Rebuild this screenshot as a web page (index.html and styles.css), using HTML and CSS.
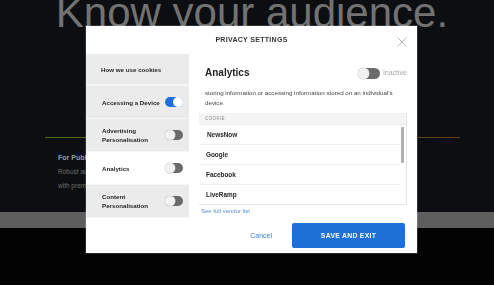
FILE: index.html
```html
<!DOCTYPE html>
<html lang="en">
<head>
    <meta charset="UTF-8">
    <title>Privacy settings</title>
    <link rel="stylesheet" href="styles.css">
</head>
<body>
    <div class="page">
        <h1 class="hero">Know your audience.</h1>
        <div class="rule"></div>
        <div class="intro">
            <h4>For Publishers</h4>
            <p>Robust audience data for every site<br>with premium data partners</p>
        </div>
        <div class="band"></div>
    </div>

    <div class="overlay">
        <div class="modal">
            <div class="modal-head">
                <span></span>
                <h2>PRIVACY SETTINGS</h2>
                <button class="close" aria-label="Close">
                    <svg width="10" height="10" viewBox="0 0 10 10">
                        <path d="M0.5 0.5 L9.5 9.5 M9.5 0.5 L0.5 9.5" stroke="#b4b4b4" stroke-width="1" fill="none"/>
                    </svg>
                </button>
            </div>
            <div class="modal-body">
                <ul class="side">
                    <li class="side-item first">How we use cookies</li>
                    <li class="side-item">Accessing a Device <span class="switch on"></span></li>
                    <li class="side-item">Advertising<br>Personalisation <span class="switch"></span></li>
                    <li class="side-item active">Analytics <span class="switch"></span></li>
                    <li class="side-item">Content<br>Personalisation <span class="switch"></span></li>
                </ul>
                <div class="panel">
                    <div class="panel-title">
                        <h3>Analytics</h3>
                        <div class="state"><span class="switch big"></span> Inactive</div>
                    </div>
                    <p class="desc">storing information or accessing information stored on an individual's device.</p>
                    <div class="vendors">
                        <div class="vendors-head">COOKIE</div>
                        <div class="vendor-scroll">
                            <ul class="vendor-list">
                                <li class="indent">NewsNow</li>
                                <li>Google</li>
                                <li>Facebook</li>
                                <li>LiveRamp</li>
                            </ul>
                            <div class="track"><div class="thumb"></div></div>
                        </div>
                    </div>
                    <a class="vendor-link" href="#">See full vendor list</a>
                    <div class="actions">
                        <a class="cancel" href="#">Cancel</a>
                        <button class="save">SAVE AND EXIT</button>
                    </div>
                </div>
            </div>
        </div>
    </div>
</body>
</html>
```

FILE: styles.css
```css
html {
    background: #030303;
}
body {
    margin: 0;
    font-family: "Liberation Sans", Arial, sans-serif;
    overflow: hidden;
}

/* page behind the dialog */
.page {
    background: #0c0e11;
}
.hero {
    margin: -8px 0 0 0;
    padding-left: 10px;
    font-size: 42px;
    line-height: 42px;
    font-weight: normal;
    text-align: center;
    color: #727272;
    white-space: nowrap;
}
.rule {
    height: 1px;
    margin: 103px 34px 0 45px;
    background: linear-gradient(to right, #4d6a1c, #55561c 55%, #6b3d16);
}
.intro {
    padding-left: 58px;
    padding-bottom: 19px;
}
.intro h4 {
    margin: 15px 0 2px 0;
    font-size: 7px;
    line-height: 10px;
    color: #9a9a9a;
}
.intro p {
    margin: 0;
    font-size: 6.5px;
    line-height: 14px;
    color: #6e6e6e;
}
.band {
    height: 16px;
    background: #5d5d5d;
}

/* dialog */
.overlay {
    position: fixed;
    top: 0;
    left: 0;
    right: 0;
    bottom: 0;
    padding: 26px 0 0 86px;
}
.modal {
    width: 331px;
    height: 227px;
    background: #fff;
    display: flex;
    flex-direction: column;
    box-shadow: 0 0 0 1px rgba(255, 255, 255, 0.15);
}
.modal-head {
    height: 28px;
    display: grid;
    grid-template-columns: 1fr auto 1fr;
    align-items: center;
}
.modal-head h2 {
    margin: 0;
    font-size: 7px;
    line-height: 10px;
    letter-spacing: 0.3px;
    color: #333;
}
.close {
    justify-self: end;
    margin: 4px 10px 0 0;
    padding: 0;
    border: 0;
    background: none;
    display: flex;
}
.modal-body {
    flex: 1;
    display: flex;
}

.side {
    list-style: none;
    margin: 0;
    padding: 0;
    width: 103px;
}
.side-item {
    height: 32px;
    display: flex;
    align-items: center;
    justify-content: space-between;
    padding: 0 6px 0 16px;
    background: #ebebeb;
    border-bottom: 1px solid #f6f6f6;
    font-size: 6.2px;
    font-weight: bold;
    line-height: 9px;
    color: #262626;
}
.side-item.first {
    height: 30px;
    padding-left: 15px;
    border-bottom: 2px solid #f4f4f4;
}
.side-item.active {
    background: #fff;
}

.switch {
    flex: none;
    width: 18px;
    height: 10px;
    border-radius: 5px;
    background: #6a6a6a;
    position: relative;
}
.switch::after {
    content: "";
    position: absolute;
    top: 0;
    left: 0;
    width: 10px;
    height: 10px;
    border-radius: 50%;
    background: #f2f2f2;
    box-shadow: 0 0 0 0.5px #ccc;
}
.switch.on {
    background: #1b6fe0;
}
.switch.on::after {
    left: 8px;
    background: #fff;
    box-shadow: none;
}
.switch.big {
    width: 22px;
    height: 11px;
    border-radius: 6px;
}
.switch.big::after {
    width: 11px;
    height: 11px;
}

/* right panel */
.panel {
    flex: 1;
    padding: 10px 10px 0 10px;
    display: flex;
    flex-direction: column;
}
.panel-title {
    height: 18px;
    display: flex;
    align-items: center;
    justify-content: space-between;
    padding-left: 6px;
}
.panel-title h3 {
    margin: 0;
    font-size: 10px;
    line-height: 12px;
    color: #222;
}
.state {
    display: flex;
    align-items: center;
    gap: 3px;
    font-size: 7px;
    line-height: 10px;
    color: #a9a9a9;
}
.desc {
    margin: 6px 0 0 0;
    padding: 0 4px 0 6px;
    font-size: 6.2px;
    line-height: 9.5px;
    color: #444;
}
.vendors {
    margin-top: 6px;
    border-right: 1px solid #e4e4e4;
    border-bottom: 1px solid #e6e6e6;
}
.vendors-head {
    height: 11px;
    line-height: 11px;
    padding-left: 6px;
    background: #f4f4f4;
    border-bottom: 1px solid #ececec;
    font-size: 4.5px;
    letter-spacing: 0.4px;
    color: #888;
}
.vendor-scroll {
    display: flex;
    height: 79px;
}
.vendor-list {
    flex: 1;
    list-style: none;
    margin: 0;
    padding: 0;
}
.vendor-list li {
    height: 19px;
    line-height: 19px;
    padding-left: 7px;
    border-bottom: 1px solid #efefef;
    font-size: 6.4px;
    font-weight: bold;
    color: #242424;
}
.vendor-list li:last-child {
    border-bottom: 0;
}
.vendor-list li.indent {
    padding-left: 8px;
}
.track {
    width: 6px;
    padding: 2px 2px 0 1px;
    box-sizing: border-box;
}
.thumb {
    height: 36px;
    background: #b0b0b0;
    border-radius: 1px;
}
.vendor-link {
    margin-top: 2px;
    padding-left: 2px;
    font-size: 6px;
    line-height: 9px;
    color: #5b8fd0;
    text-decoration: none;
}
.actions {
    margin-top: 7px;
    display: flex;
    align-items: center;
    justify-content: flex-end;
    gap: 20px;
    padding-right: 2px;
}
.cancel {
    font-size: 7px;
    line-height: 10px;
    color: #3d7fd1;
    text-decoration: none;
}
.save {
    width: 113px;
    height: 25px;
    border: 0;
    border-radius: 2px;
    background: #1e6fd6;
    color: #fff;
    font-family: "Liberation Sans", Arial, sans-serif;
    font-size: 6.8px;
    font-weight: bold;
    letter-spacing: 0.3px;
}
```
